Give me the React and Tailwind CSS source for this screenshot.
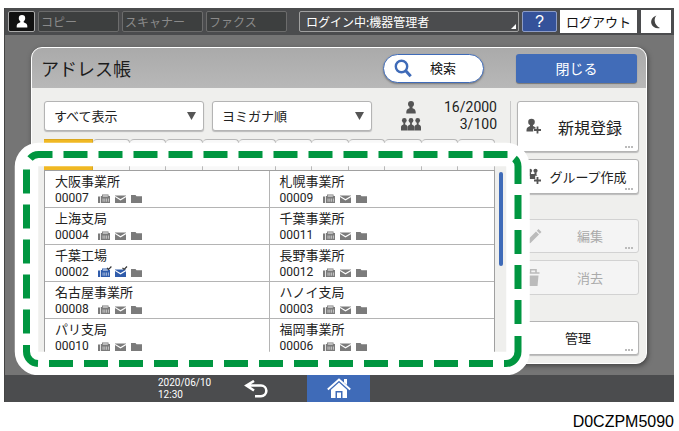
import React, { useState } from 'react';
import clsx from 'clsx';

const ENTRIES = [
  { id: '00007', name: '大阪事業所' },
  { id: '00009', name: '札幌事業所' },
  { id: '00004', name: '上海支局' },
  { id: '00011', name: '千葉事業所' },
  { id: '00002', name: '千葉工場', registered: true },
  { id: '00012', name: '長野事業所' },
  { id: '00008', name: '名古屋事業所' },
  { id: '00003', name: 'ハノイ支局' },
  { id: '00010', name: 'パリ支局' },
  { id: '00006', name: '福岡事業所' },
];

const INDEX_TABS = ['常用', 'あ', 'か', 'さ', 'た', 'な', 'は', 'ま', 'や', 'ら', 'わ', '切替'];

const FaxIcon = ({ checked }) => (
  <svg width="14" height="13" viewBox="0 0 14 13" className={checked ? 'text-[#2f5cab]' : 'text-[#7b7b7b]'}>
    <path fill="currentColor" d="M0 4.500h2V11H0zM2.800 4h1.200V2.500h6.500V4h1.500v7H2.800z" />
    <path fill="#fff" d="M4.800 3.300h5v1.400h-5zM4.600 6.500h.9v3.200h-.9zM6.400 6.500h.9v3.200h-.9zM8.200 6.500h.9v3.200h-.9zM10 6.500h.8v3.200H10z" opacity=".65" />
    {checked && <path fill="none" stroke="#333" strokeWidth="1.200" d="M9 1.800l1.600 1.600L13.400.5" />}
  </svg>
);

const MailIcon = ({ checked }) => (
  <svg width="13" height="13" viewBox="0 0 13 13" className={checked ? 'text-[#2f5cab]' : 'text-[#7b7b7b]'}>
    <path fill="currentColor" d="M0 3.500h11V11H0z" />
    <path fill="none" stroke="#fff" strokeWidth="1.200" d="M0 4.400l5.500 3.400L11 4.400" />
    {checked && <path fill="none" stroke="#333" strokeWidth="1.200" d="M7.500 1.800l1.600 1.600L12 .5" />}
  </svg>
);

const FolderIcon = () => (
  <svg width="11" height="13" viewBox="0 0 11 13">
    <path fill="#7b7b7b" d="M0 3h4.500l1 1.200H11V11H0z" />
  </svg>
);

const PersonShape = ({ className }) => (
  <svg width="14" height="13" viewBox="0 0 14 13" className={className}>
    <path fill="currentColor" d="M7 0a3.200 3.200 0 0 1 3.200 3.200c0 1.500-.6 2.400-1.500 3.100v.9c1.800.9 3.500 1.400 3.600 3.500V12.500H1.700v-1.800c.1-2.100 1.800-2.600 3.600-3.500v-.9C4.400 5.600 3.800 4.700 3.800 3.200A3.200 3.200 0 0 1 7 0z" />
  </svg>
);

const PawnIcon = () => (
  <svg width="10" height="13" viewBox="0 0 10 13" className="text-[#555]">
    <circle cx="5" cy="3" r="3" fill="currentColor" />
    <path fill="currentColor" d="M3.500 4.500h3v2.700C8.500 8 9.700 8.800 9.700 11v1.500H.3V11c0-2.200 1.200-3 3.200-3.800z" />
  </svg>
);

const GroupShape = () => (
  <svg width="20" height="13" viewBox="0 0 20 13" className="text-[#555]">
    {[0, 6.7, 13.4].map((x) => (
      <g key={x} transform={`translate(${x} 0)`} fill="currentColor">
        <circle cx="3.300" cy="2.500" r="2.400" />
        <path d="M2.400 4h1.800v2.500c1.500.5 2.400 1 2.400 2.700V12.500H0V9.200c0-1.700.9-2.200 2.400-2.700z" />
      </g>
    ))}
  </svg>
);

const AddPersonIcon = () => (
  <svg width="16" height="17" viewBox="0 0 16 17" className="text-[#555]">
    <circle cx="5.500" cy="4" r="3.300" fill="currentColor" />
    <path fill="currentColor" d="M4 6h3v2l2.500 1.200v1.600H7.200V13.500H.5V12c0-2.300 1.500-3 3.500-3.900z" />
    <path stroke="currentColor" strokeWidth="1.800" d="M11.500 8.500v7M8 12h7" />
  </svg>
);

const AddGroupIcon = () => (
  <svg width="16" height="17" viewBox="0 0 16 17" className="text-[#555]">
    <g fill="currentColor">
      <circle cx="4" cy="2.800" r="2.100" />
      <circle cx="9.500" cy="2.800" r="2.100" />
      <path d="M3 4.500h2V6h3.500V4.500h2V7l1 .8H9.200V11H3.500V8H1.500L3 7z" />
    </g>
    <path stroke="currentColor" strokeWidth="1.800" d="M11.500 9v7M8 12.500h7" />
  </svg>
);

const PencilIcon = () => (
  <svg width="16" height="17" viewBox="0 0 16 17">
    <path fill="#bbb" d="M12.500 1l3 3-1.700 1.700-3-3zM10 3.500l3 3L4.500 15l-4 1 1-4z" />
  </svg>
);

const TrashIcon = () => (
  <svg width="14" height="19" viewBox="0 0 14 19">
    <path fill="#bbb" d="M2 7.500h10.500L11.500 18H3z" />
    <path fill="none" stroke="#bbb" strokeWidth="1.600" d="M1 5h12.500M4.500 4.500V1.800H10v2.700" />
  </svg>
);

const MoonIcon = () => (
  <svg width="14" height="16" viewBox="0 0 14 16">
    <path fill="#444" d="M7.500 1.500C3 3 1.500 6.500 2.500 10c1 3.200 4.500 4.800 8.500 4C8 12.500 6 10 5.700 7c-.2-2.500.6-4.300 1.800-5.500z" />
  </svg>
);

const SearchIcon = () => (
  <svg width="18" height="19" viewBox="0 0 18 19">
    <circle cx="7.500" cy="7.500" r="5.700" fill="none" stroke="#3f6bb8" strokeWidth="2.400" />
    <path stroke="#3f6bb8" strokeWidth="3" d="M11.500 11.500l5.200 5.700" />
  </svg>
);

const BackIcon = () => (
  <svg width="24" height="18" viewBox="0 0 24 18">
    <path fill="none" stroke="#fff" strokeWidth="2.600" d="M10 1L2.500 5.500 10 10.500M2.500 5.500H17a5 5 0 0 1 0 10.700h-6" />
  </svg>
);

const HomeIcon = () => (
  <svg width="24" height="21" viewBox="0 0 24 21">
    <path fill="none" stroke="#fff" strokeWidth="2" d="M.8 11.500L12 1.600l11.200 9.900" />
    <path fill="#fff" d="M17 1h3v6l-3-2.600zM12 4.500l8 7.200V20h-4.500v-7h-7v7H4v-8.300zM10 14.500h4V20h-4z" />
  </svg>
);

const Select = ({ label, options, className }) => (
  <div className={clsx('relative h-[30px]', className)}>
    <select
      aria-label={label}
      className="h-full w-full appearance-none rounded-[3px] border border-[#b4b4b4] bg-white pl-[9px] text-[13px] text-[#222] shadow-[0_1px_1px_#bbb]"
    >
      {options.map((o) => (
        <option key={o}>{o}</option>
      ))}
    </select>
    <svg width="9" height="8" viewBox="0 0 9 8" className="pointer-events-none absolute top-[11px] right-2">
      <path fill="#555" d="M0 0h9L4.500 8z" />
    </svg>
  </div>
);

const SideButton = ({ icon, children, className, disabled, more = true, large }) => (
  <button
    disabled={disabled}
    className={clsx(
      'relative flex items-center rounded-[3px] border pl-2',
      disabled ? 'border-[#d2d2d2] bg-[#f4f4f4] text-[#aaa]' : 'border-[#b4b4b4] bg-white text-[#222] shadow-[0_1px_1px_#bbb]',
      className
    )}
  >
    <span className="w-4 shrink-0">{icon}</span>
    <span className={clsx('flex-1 text-center', large ? 'text-[16px]' : 'text-[13px]')}>{children}</span>
    {more && (
      <span className="absolute right-[5px] bottom-[3px] flex gap-px">
        <i className="h-[2px] w-[2px] bg-[#bbb]" />
        <i className="h-[2px] w-[2px] bg-[#bbb]" />
        <i className="h-[2px] w-[2px] bg-[#bbb]" />
      </span>
    )}
  </button>
);

// Dashed callout frame with a white halo, drawn over the list
const Callout = () => (
  <svg
    viewBox="14 142 516 233"
    preserveAspectRatio="none"
    className="pointer-events-none absolute top-[3px] -left-[30px] z-10 h-[233px] w-[calc(100%+56px)]"
  >
    <rect x="26.500" y="154.500" width="491.500" height="209" rx="12" fill="none" stroke="#fff" strokeWidth="23.500" />
    <g fill="none" stroke="#009640" strokeWidth="7">
      <path strokeDasharray="24 11" d="M63.500 154.500H508" />
      <path strokeDasharray="24 11" d="M518 195V325" />
      <path strokeDasharray="24 11" d="M49 363.500H493" />
      <path strokeDasharray="24 11" d="M26.500 169.500V334" />
      <path d="M30 158.500Q33.500 154.500 38.500 154.500H52.500" />
      <path d="M514.500 158.500Q518 161.500 518 166.500V184" />
      <path d="M518 336V351.500A12 12 0 0 1 506 363.500H504" />
      <path d="M26.500 345V351.500A12 12 0 0 0 38 363.500" />
    </g>
  </svg>
);

const TopBar = () => (
  <header className="flex h-[27px] items-center bg-[#4b4c4e] px-[3px] text-[12px]">
    <button aria-label="ユーザー" className="flex h-[21px] w-[27px] items-center justify-center rounded-[2px] border border-[#aaa] bg-[#111] text-white">
      <PersonShape />
    </button>
    {['コピー', 'スキャナー', 'ファクス'].map((app) => (
      <button key={app} className="ml-[3px] h-[21px] w-[81px] rounded-[2px] border border-[#6c6c6c] bg-[#3d3f3f] pl-0.5 text-left leading-[19px] text-[#8a8a8a]">
        {app}
      </button>
    ))}
    <button className="relative ml-3 h-[21px] flex-1 rounded-[2px] border border-[#a0a0a0] bg-[#4b4c4e] pl-1.5 text-left leading-[19px] text-white">
      ログイン中:機器管理者
      <svg width="5" height="5" viewBox="0 0 5 5" className="absolute right-[2px] bottom-[2px]">
        <path fill="#fff" d="M5 0v5H0z" />
      </svg>
    </button>
    <button className="ml-[3px] h-[21px] w-[35px] rounded-[2px] border border-[#8d9cc6] bg-[#35529a] font-['Liberation_Sans'] text-[16px] leading-[19px] text-white">?</button>
    <button className="ml-[3px] h-[23px] w-[77px] bg-white text-[13px] leading-[21px] text-[#111]">ログアウト</button>
    <button aria-label="省エネ" className="ml-1 flex h-[23px] w-[30px] items-center justify-center bg-white">
      <MoonIcon />
    </button>
  </header>
);

const AddressList = () => {
  const [active, setActive] = useState(0);

  return (
    <div className="relative mt-2 flex flex-1 flex-col">
      <div className="flex h-[31px] pr-[9px]">
        {INDEX_TABS.map((tab, i) => (
          <button
            key={tab}
            aria-label={tab}
            onClick={() => setActive(i)}
            className={clsx(
              'border-t border-r',
              i === 0 ? 'w-[49px]' : 'flex-1',
              i === active ? 'border-[#d9a720] bg-[#f0b823]' : 'rounded-t-[4px] border-[#b8b8b8] bg-[#f8f8f8]'
            )}
          />
        ))}
      </div>
      <div className="flex">
        <div className="grid flex-1 grid-cols-2 border-t border-r border-l border-[#a0a0a0] bg-white">
          {ENTRIES.map((entry, i) => (
            <button
              key={entry.id}
              className={clsx('h-[37px] border-b border-[#b4b4b4] pl-2.5 text-left text-[13px] text-[#222]', i % 2 === 0 && 'border-r')}
            >
              <span className="block leading-[18px]">{entry.name}</span>
              <span className="flex h-4 items-center">
                <span className="w-[43px] font-[Roboto,sans-serif] text-[12px] leading-[16px]">{entry.id}</span>
                <span className="flex gap-[3px]">
                  <FaxIcon checked={entry.registered} />
                  <MailIcon checked={entry.registered} />
                  <FolderIcon />
                </span>
              </span>
            </button>
          ))}
        </div>
        <div className="w-[9px] pt-[2px] pl-1">
          <div className="h-[94px] w-1 rounded-sm bg-[#3f6bb8]" />
        </div>
      </div>
      <Callout />
    </div>
  );
};

const App = () => (
  <div className="bg-white pt-2 pr-[5px] pl-1 font-['Noto_Sans_CJK_JP',sans-serif]">
    <div className="border-l border-[#444] bg-[#757575]">
      <TopBar />

      <main className="pt-3 pr-[27px] pb-[11px] pl-[26px]">
        <div className="rounded-[11px] border border-white bg-[#efefed] shadow-[1px_2px_5px_#444]">
          <div className="flex h-10 items-center rounded-t-[10px] bg-gradient-to-b from-[#aaa] to-[#b8b8b8] pr-[9px] pl-[9px]">
            <h1 className="flex-1 text-[18px] leading-[24px] text-[#1c1c1c]">アドレス帳</h1>
            <button className="flex h-[29px] w-[101px] items-center gap-[18px] rounded-full border border-[#3f6bb8] bg-white pl-2.5 text-[13px] text-[#111] shadow-[0_1px_2px_#777]">
              <SearchIcon />
              検索
            </button>
            <button className="ml-8 h-[29px] w-[121px] rounded-[3px] bg-[#416cb8] text-[14px] text-white shadow-[0_1px_1px_#777]">閉じる</button>
          </div>

          <div className="flex pt-[13px] pr-[7px] pl-3">
            <section className="flex flex-1 flex-col">
              <div className="flex h-[30px] items-center">
                <Select label="表示" options={['すべて表示']} className="w-40" />
                <Select label="並び順" options={['ヨミガナ順']} className="ml-2 w-40" />
                <div className="ml-[29px] flex flex-col items-center gap-1">
                  <PawnIcon />
                  <GroupShape />
                </div>
                <div className="flex-1 pr-[7px] text-right font-[Roboto,sans-serif] text-[14px] leading-[17px] text-[#222]">
                  <p>16/2000</p>
                  <p>3/100</p>
                </div>
              </div>
              <AddressList />
            </section>

            <aside className="ml-1.5 flex w-[129px] flex-col border-l border-[#c8c8c8] pb-2 pl-1.5">
              <SideButton icon={<AddPersonIcon />} className="h-[51px]" large>新規登録</SideButton>
              <SideButton icon={<AddGroupIcon />} className="mt-[7px] h-[35px] pr-1">グループ作成</SideButton>
              <SideButton icon={<PencilIcon />} className="mt-[25px] h-[34px]" disabled>編集</SideButton>
              <SideButton icon={<TrashIcon />} className="mt-[7px] h-[35px]" more={false} disabled>消去</SideButton>
              <SideButton className="mt-[26px] h-[34px] pr-6">管理</SideButton>
            </aside>
          </div>
        </div>
      </main>

      <footer className="flex h-[27px] items-center bg-[#4b4c4e] pl-[153px]">
        <time className="w-[86px] font-[Roboto,sans-serif] text-[10px] leading-[12px] text-white">
          2020/06/10
          <br />
          12:30
        </time>
        <button aria-label="戻る" className="flex h-full w-[63px] items-center">
          <BackIcon />
        </button>
        <button aria-label="ホーム" className="flex h-full w-[63px] items-center justify-center bg-[#3f6bb8]">
          <HomeIcon />
        </button>
      </footer>
    </div>
    <p className="mt-[11px] text-right font-['Liberation_Sans',sans-serif] text-[16px] leading-[18px] text-black">D0CZPM5090</p>
  </div>
);

export default App;
